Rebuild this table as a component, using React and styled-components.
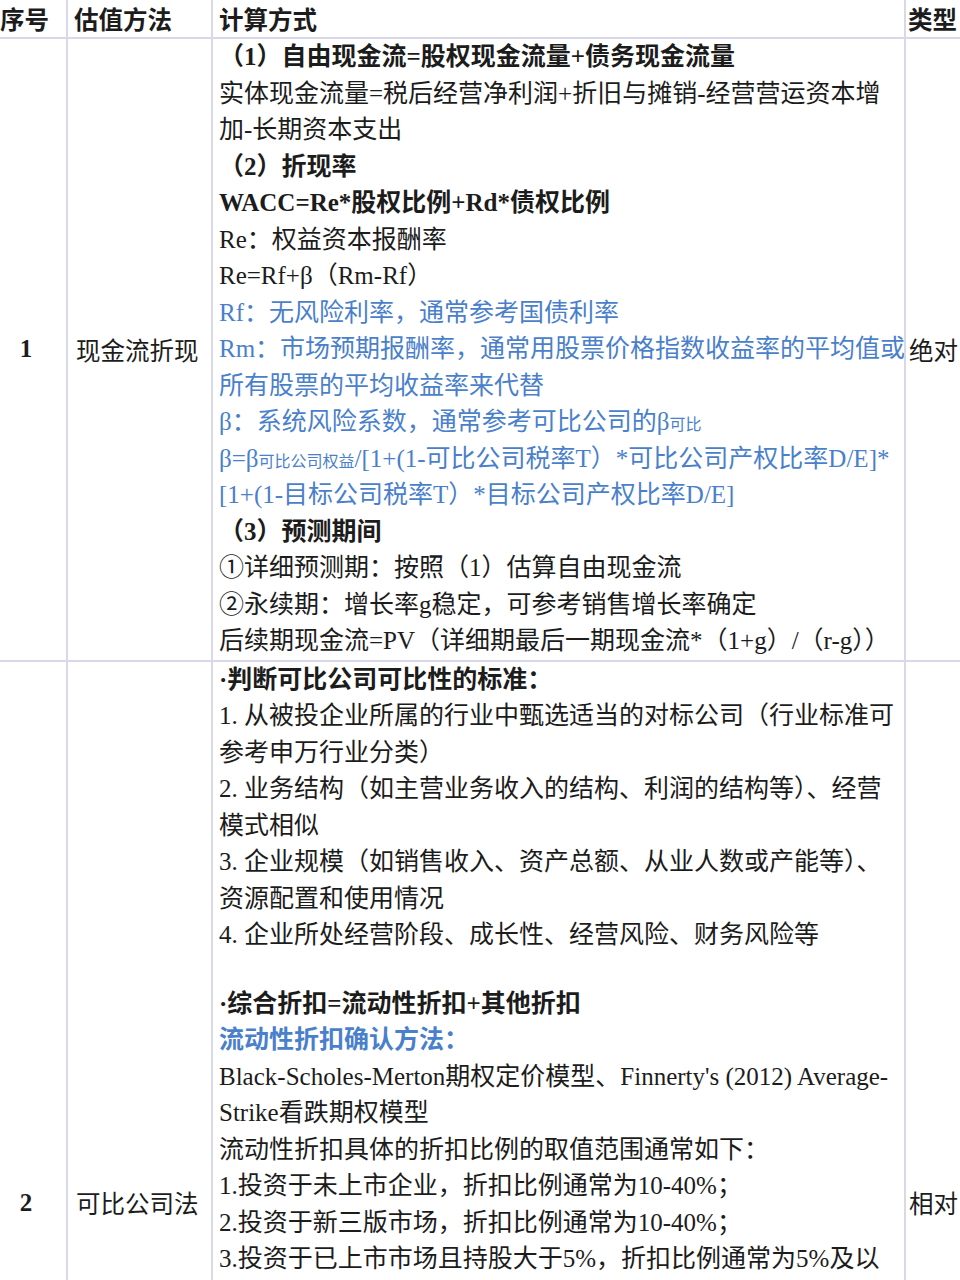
import styled, { createGlobalStyle } from 'styled-components';

const GlobalStyle = createGlobalStyle`
  html, body {
    margin: 0;
    padding: 0;
    background: #ffffff;
    overflow-x: hidden;
  }
  body {
    font-family: "Liberation Serif", "Noto Sans CJK SC", serif;
    color: #1c1c1c;
  }
`;

const rowOne = [
  { text: '（1）自由现金流=股权现金流量+债务现金流量', bold: true },
  { text: '实体现金流量=税后经营净利润+折旧与摊销-经营营运资本增' },
  { text: '加-长期资本支出' },
  { text: '（2）折现率', bold: true },
  { text: 'WACC=Re*股权比例+Rd*债权比例', bold: true },
  { text: 'Re：权益资本报酬率' },
  { text: 'Re=Rf+β（Rm-Rf）' },
  { text: 'Rf：无风险利率，通常参考国债利率', blue: true },
  { text: 'Rm：市场预期报酬率，通常用股票价格指数收益率的平均值或', blue: true },
  { text: '所有股票的平均收益率来代替', blue: true },
  { text: 'β：系统风险系数，通常参考可比公司的β', sub: '可比', blue: true },
  {
    text: 'β=β',
    sub: '可比公司权益',
    after: '/[1+(1-可比公司税率T）*可比公司产权比率D/E]*',
    blue: true,
  },
  { text: '[1+(1-目标公司税率T）*目标公司产权比率D/E]', blue: true },
  { text: '（3）预测期间', bold: true },
  { text: '①详细预测期：按照（1）估算自由现金流' },
  { text: '②永续期：增长率g稳定，可参考销售增长率确定' },
  { text: '后续期现金流=PV（详细期最后一期现金流*（1+g）/（r-g））' },
];

const rowTwo = [
  { text: '·判断可比公司可比性的标准：', bold: true },
  { text: '1. 从被投企业所属的行业中甄选适当的对标公司（行业标准可' },
  { text: '参考申万行业分类）' },
  { text: '2. 业务结构（如主营业务收入的结构、利润的结构等）、经营' },
  { text: '模式相似' },
  { text: '3. 企业规模（如销售收入、资产总额、从业人数或产能等）、' },
  { text: '资源配置和使用情况' },
  { text: '4. 企业所处经营阶段、成长性、经营风险、财务风险等' },
  { text: '', empty: true },
  { text: '·综合折扣=流动性折扣+其他折扣', bold: true },
  { text: '流动性折扣确认方法：', blue: true, bold: true },
  { text: "Black-Scholes-Merton期权定价模型、Finnerty's (2012) Average-" },
  { text: 'Strike看跌期权模型' },
  { text: '流动性折扣具体的折扣比例的取值范围通常如下：' },
  { text: '1.投资于未上市企业，折扣比例通常为10-40%；' },
  { text: '2.投资于新三版市场，折扣比例通常为10-40%；' },
  { text: '3.投资于已上市市场且持股大于5%，折扣比例通常为5%及以' },
];

const Lines = ({ lines }) =>
  lines.map((line, i) => (
    <Line key={i} $bold={line.bold} $blue={line.blue} $empty={line.empty}>
      {line.text}
      {line.sub && <Sub>{line.sub}</Sub>}
      {line.after}
    </Line>
  ));

export default function App() {
  return (
    <>
      <GlobalStyle />
      <Table>
        <HeadCell>序号</HeadCell>
        <HeadCell>估值方法</HeadCell>
        <HeadCell>计算方式</HeadCell>
        <HeadCell $tight>类型</HeadCell>

        <NumberCell>1</NumberCell>
        <MethodCell>现金流折现</MethodCell>
        <FormulaCell>
          <Lines lines={rowOne} />
        </FormulaCell>
        <TypeCell>绝对</TypeCell>

        <NumberCell>2</NumberCell>
        <MethodCell>可比公司法</MethodCell>
        <FormulaCell>
          <Lines lines={rowTwo} />
        </FormulaCell>
        <TypeCell>相对</TypeCell>
      </Table>
    </>
  );
}

const Table = styled.div`
  display: grid;
  grid-template-columns: 72px 143px 691px 120px;
  grid-template-rows: 37px auto minmax(1082px, auto);
  gap: 2px;
  width: max-content;
  margin-left: -6px;
  background: #d9d8e8;
  font-size: 25px;
`;

const Cell = styled.div`
  background: #ffffff;
  display: flex;
  align-items: center;
  min-width: 0;
  overflow: hidden;
  white-space: nowrap;
`;

const HeadCell = styled(Cell)`
  padding-left: ${({ $tight }) => ($tight ? '2px' : '6px')};
  font-family: "Noto Sans CJK SC", sans-serif;
  font-weight: 700;
  font-size: 24.5px;
  line-height: 37px;
`;

const NumberCell = styled(Cell)`
  justify-content: center;
  padding-right: 8px;
  font-weight: 700;
`;

const MethodCell = styled(Cell)`
  padding-left: 8px;
  font-family: "Noto Sans CJK SC", sans-serif;
  font-size: 24.5px;
`;

const FormulaCell = styled(Cell)`
  flex-direction: column;
  align-items: stretch;
  justify-content: flex-start;
  padding-left: 6px;
`;

const TypeCell = styled(Cell)`
  padding-left: 3px;
  font-family: "Noto Sans CJK SC", sans-serif;
  font-size: 24.5px;
`;

const Line = styled.div`
  height: ${({ $empty }) => ($empty ? '32px' : '36.5px')};
  line-height: 36.5px;
  white-space: nowrap;
  font-weight: ${({ $bold }) => ($bold ? 700 : 400)};
  color: ${({ $blue }) => ($blue ? '#4a7fcb' : '#1c1c1c')};
`;

const Sub = styled.span`
  font-family: "Noto Sans CJK SC", sans-serif;
  font-size: 16px;
`;
